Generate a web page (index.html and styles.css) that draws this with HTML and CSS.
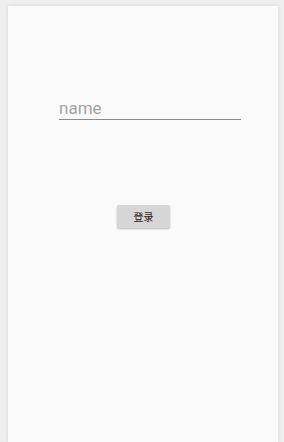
FILE: index.html
```html
<!DOCTYPE html>
<html lang="zh">
<head>
  <meta charset="UTF-8" />
  <meta name="viewport" content="width=device-width, initial-scale=1.0" />
  <title>登录</title>
  <link rel="stylesheet" href="styles.css">
</head>
<body>
  <div class="card">
    <div class="field">
      <input type="text" id="name" placeholder="name" />
    </div>
    <div class="actions">
      <button class="login-button">登录</button>
    </div>
  </div>
</body>
</html>
```

FILE: styles.css
```css
html, body {
  height: 100%;
}

body {
  margin: 0;
  background-color: #efefef;
  font-family: Roboto, "Noto Sans CJK SC", sans-serif;
  overflow: hidden;
}

.card {
  margin: 6px 6px 0 8px;
  height: calc(100vh - 6px);
  background-color: #fafafa;
  box-shadow: 0 0 4px rgba(0, 0, 0, 0.12);
  padding-top: 89px;
  box-sizing: border-box;
}

.field {
  padding: 0 37px 0 51px;
}

.field input {
  display: block;
  width: 100%;
  box-sizing: border-box;
  border: none;
  border-bottom: 1px solid #8c8c8c;
  background: transparent;
  font-family: Roboto, sans-serif;
  font-size: 17px;
  color: #333;
  padding: 3px 0 1px;
  outline: none;
}

.field input::placeholder {
  color: #a3a3a3;
}

.actions {
  display: flex;
  justify-content: center;
  margin-top: 85px;
  padding-left: 1px;
}

.login-button {
  width: 53px;
  height: 23px;
  border: none;
  border-radius: 2px;
  background-color: #d6d6d6;
  box-shadow: 0 1px 2px rgba(0, 0, 0, 0.25);
  font-family: "Noto Sans CJK SC", sans-serif;
  font-size: 10px;
  color: #222;
  padding: 0;
  cursor: pointer;
}
```
